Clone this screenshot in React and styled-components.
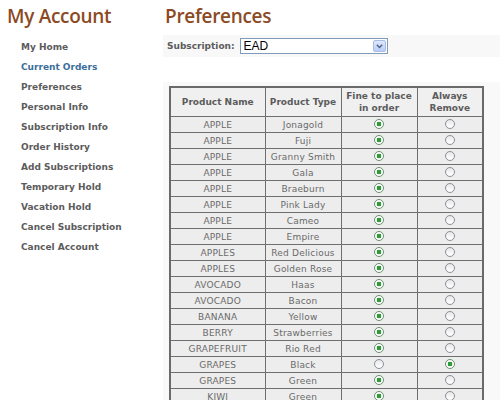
import React from "react";
import styled, { createGlobalStyle } from "styled-components";

const Global = createGlobalStyle`
  html, body { margin: 0; padding: 0; background: #fff; }
  body { font-family: "DejaVu Sans", Verdana, sans-serif; }
`;

const Page = styled.div`
  display: flex;
  width: 500px;
  height: 400px;
  overflow: hidden;
`;

const Sidebar = styled.aside`
  width: 163px;
  flex: none;
  padding: 4px 0 0 7px;
  box-sizing: border-box;
`;

const Title = styled.h1`
  margin: 0;
  font-family: "Open Sans", sans-serif;
  font-weight: 600;
  font-size: 19px;
  line-height: 24px;
  color: #8c4a24;
  letter-spacing: -0.3px;
`;

const Nav = styled.ul`
  list-style: none;
  margin: 9px 0 0 14px;
  padding: 0;
`;

const NavItem = styled.li`
  font-size: 9px;
  font-weight: bold;
  line-height: 20px;
  color: ${(p) => (p.$active ? "#3b6e9a" : "#5c5c5c")};
`;

const Main = styled.main`
  flex: 1;
  padding-top: 4px;
`;

const MainTitle = styled(Title)`
  padding-left: 2px;
`;

const SubBar = styled.div`
  margin-top: 7px;
  height: 22px;
  background: #f8f8f8;
  display: flex;
  align-items: center;
  padding-left: 4px;
  gap: 5px;
`;

const Label = styled.span`
  font-size: 9px;
  font-weight: bold;
  color: #5c5c5c;
`;

const Select = styled.div`
  width: 148px;
  height: 16px;
  box-sizing: border-box;
  border: 1px solid #7f9db9;
  background: #fff;
  display: flex;
  align-items: center;
  justify-content: space-between;
  font-family: "Liberation Sans", Arial, sans-serif;
  font-size: 12px;
  color: #000;
  padding-left: 3px;
`;

const DropBtn = styled.div`
  width: 13px;
  height: 12px;
  margin-right: 1px;
  box-sizing: border-box;
  border: 1px solid #a8bde6;
  border-radius: 2px;
  background: linear-gradient(#dfe8fd, #b9cdf6);
  display: flex;
  align-items: center;
  justify-content: center;
`;

const Panel = styled.div`
  margin-top: 25px;
  background: #f9f9f9;
  padding: 4px 0 0 6px;
  height: 400px;
`;

const Table = styled.table`
  border-collapse: collapse;
  border: 2px solid #6a6a6a;
  width: 313px;
  table-layout: fixed;
`;

const Th = styled.th`
  background: #f0f0f0;
  border: 1px solid #6f6f6f;
  font-size: 9px;
  font-weight: bold;
  color: #5c5c5c;
  line-height: 12px;
  height: 28px;
  padding: 0 2px;
  text-align: center;
`;

const Td = styled.td`
  background: #ededed;
  border: 1px solid #6f6f6f;
  font-size: 9px;
  color: #6a6a6a;
  height: 15px;
  padding: 0;
  line-height: 14px;
  text-align: center;
  letter-spacing: 0.2px;
`;

const Radio = styled.span`
  display: inline-block;
  vertical-align: middle;
  width: 10px;
  height: 10px;
  box-sizing: border-box;
  border-radius: 50%;
  border: 1px solid ${(p) => (p.$on ? "#6b8f6b" : "#8a8f99")};
  background: ${(p) =>
    p.$on
      ? "radial-gradient(circle, #2f9a3a 0 2.2px, #fff 2.6px)"
      : "linear-gradient(#e8e8e8, #fff)"};
  margin-top: -2px;
`;

const rows = [
  ["APPLE", "Jonagold"],
  ["APPLE", "Fuji"],
  ["APPLE", "Granny Smith"],
  ["APPLE", "Gala"],
  ["APPLE", "Braeburn"],
  ["APPLE", "Pink Lady"],
  ["APPLE", "Cameo"],
  ["APPLE", "Empire"],
  ["APPLES", "Red Delicious"],
  ["APPLES", "Golden Rose"],
  ["AVOCADO", "Haas"],
  ["AVOCADO", "Bacon"],
  ["BANANA", "Yellow"],
  ["BERRY", "Strawberries"],
  ["GRAPEFRUIT", "Rio Red"],
  ["GRAPES", "Black", true],
  ["GRAPES", "Green"],
  ["KIWI", "Green"],
];

const navItems = [
  "My Home",
  "Current Orders",
  "Preferences",
  "Personal Info",
  "Subscription Info",
  "Order History",
  "Add Subscriptions",
  "Temporary Hold",
  "Vacation Hold",
  "Cancel Subscription",
  "Cancel Account",
];

export default function App() {
  return (
    <>
      <Global />
      <Page>
        <Sidebar>
          <Title>My Account</Title>
          <Nav>
            {navItems.map((n) => (
              <NavItem key={n} $active={n === "Current Orders"}>
                {n}
              </NavItem>
            ))}
          </Nav>
        </Sidebar>
        <Main>
          <MainTitle>Preferences</MainTitle>
          <SubBar>
            <Label>Subscription:</Label>
            <Select>
              <span>EAD</span>
              <DropBtn>
                <svg width="7" height="5" viewBox="0 0 7 5">
                  <path d="M0.8 0.8 L3.5 3.6 L6.2 0.8" fill="none" stroke="#4d6185" strokeWidth="1.4" />
                </svg>
              </DropBtn>
            </Select>
          </SubBar>
          <Panel>
            <Table>
              <colgroup>
                <col style={{ width: 95 }} />
                <col style={{ width: 76 }} />
                <col style={{ width: 76 }} />
                <col style={{ width: 66 }} />
              </colgroup>
              <thead>
                <tr>
                  <Th>Product Name</Th>
                  <Th>Product Type</Th>
                  <Th>Fine to place in order</Th>
                  <Th>Always Remove</Th>
                </tr>
              </thead>
              <tbody>
                {rows.map(([name, type, remove], i) => (
                  <tr key={i}>
                    <Td>{name}</Td>
                    <Td>{type}</Td>
                    <Td>
                      <Radio $on={!remove} />
                    </Td>
                    <Td>
                      <Radio $on={!!remove} />
                    </Td>
                  </tr>
                ))}
              </tbody>
            </Table>
          </Panel>
        </Main>
      </Page>
    </>
  );
}
